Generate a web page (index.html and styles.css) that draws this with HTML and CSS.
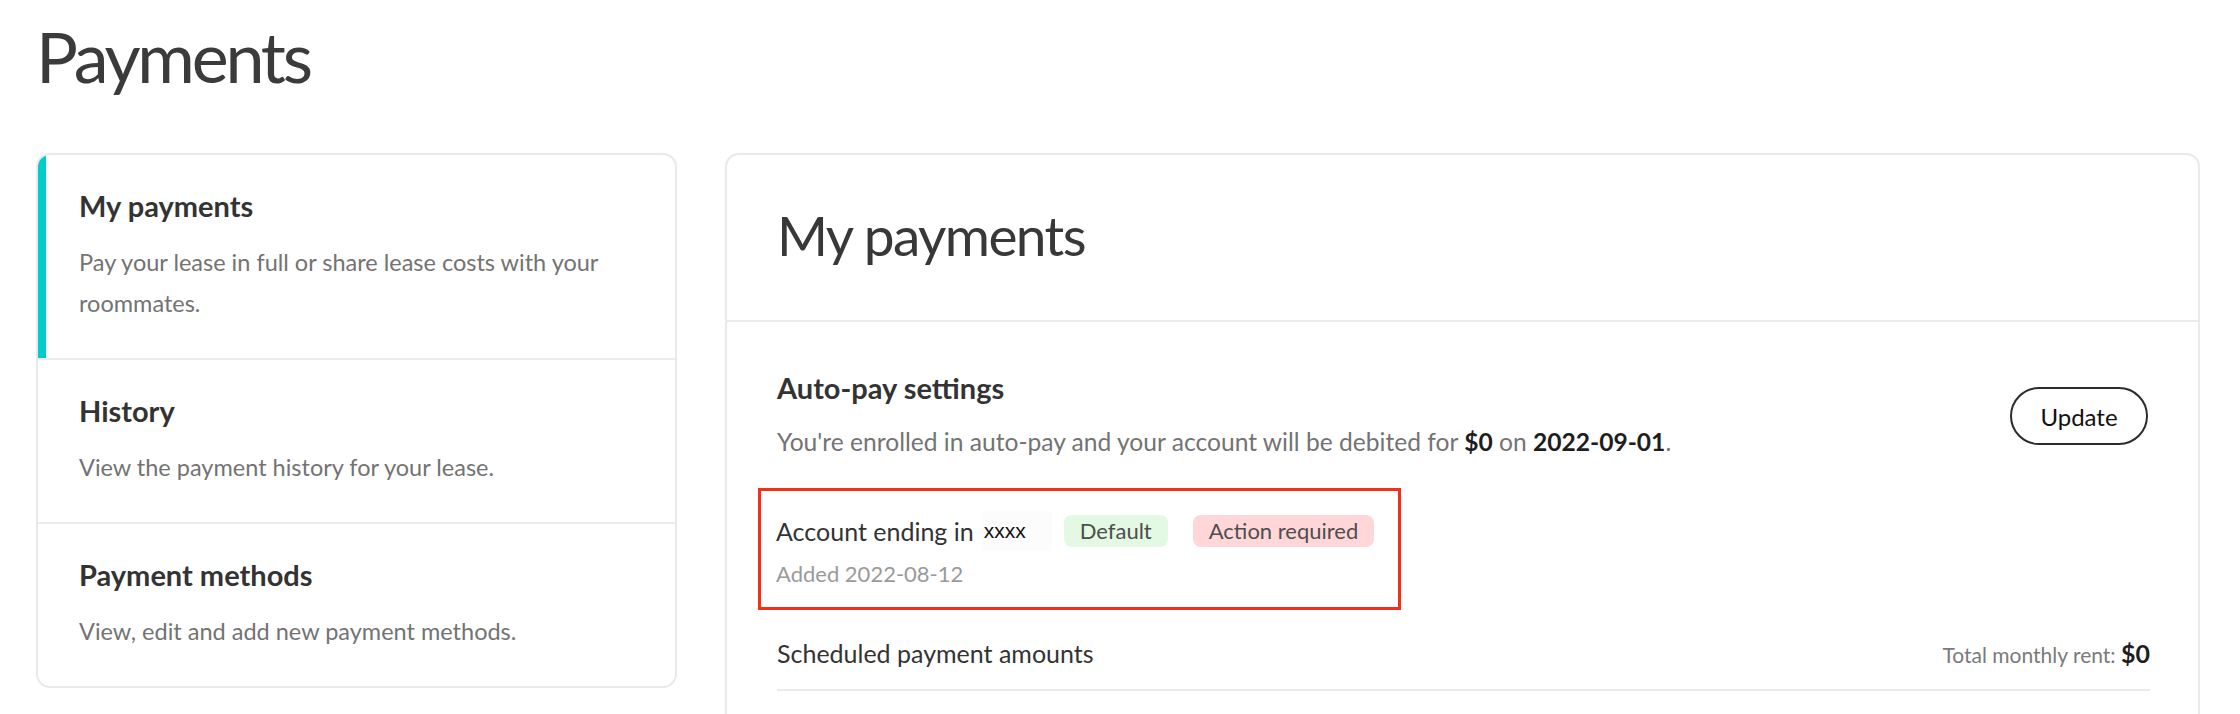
FILE: index.html
```html
<!DOCTYPE html>
<html lang="en">
<head>
<meta charset="utf-8">
<title>Payments</title>
<link rel="stylesheet" href="styles.css">
</head>
<body>
<div class="page">
  <h1 class="page-title">Payments</h1>
  <div class="layout">
    <nav class="side-card">
      <a class="nav-item active" href="#">
        <h2 class="nav-title">My payments</h2>
        <p class="nav-desc">Pay your lease in full or share lease costs with your roommates.</p>
      </a>
      <a class="nav-item" href="#">
        <h2 class="nav-title">History</h2>
        <p class="nav-desc">View the payment history for your lease.</p>
      </a>
      <a class="nav-item" href="#">
        <h2 class="nav-title">Payment methods</h2>
        <p class="nav-desc">View, edit and add new payment methods.</p>
      </a>
    </nav>
    <main class="main-card">
      <header class="main-header">
        <h2 class="main-title">My payments</h2>
      </header>
      <section class="main-body">
        <div class="autopay">
          <div class="autopay-text">
            <h3 class="section-title">Auto-pay settings</h3>
            <p class="autopay-desc">You're enrolled in auto-pay and your account will be debited for <strong>$0</strong> on <strong>2022-09-01</strong>.</p>
          </div>
          <button class="btn-update" type="button">Update</button>
        </div>
        <div class="account">
          <div class="account-row">
            <span class="account-name">Account ending in <span class="mask">xxxx</span></span>
            <span class="badge badge-default">Default</span>
            <span class="badge badge-action">Action required</span>
          </div>
          <div class="account-added">Added 2022-08-12</div>
        </div>
        <div class="scheduled">
          <span class="scheduled-title">Scheduled payment amounts</span>
          <span class="scheduled-total">Total monthly rent: <strong>$0</strong></span>
        </div>
        <div class="scheduled-list"></div>
      </section>
    </main>
  </div>
</div>
</body>
</html>
```

FILE: styles.css
```css
* { box-sizing: border-box; }

html, body {
  margin: 0;
  padding: 0;
  background: #ffffff;
}

body {
  font-family: Lato, "Noto Sans", "Liberation Sans", sans-serif;
  color: #333333;
  overflow: hidden;
}

.page {
  padding: 21px 40px 0 36px;
}

.page-title {
  margin: 0;
  font-size: 70px;
  line-height: 70px;
  font-weight: 400;
  color: #3b3b3b;
  letter-spacing: -3.2px;
}

.layout {
  display: flex;
  align-items: flex-start;
  gap: 48px;
  margin-top: 62px;
}

/* left navigation card */
.side-card {
  flex: 0 0 641px;
  border: 2px solid #e9e9e9;
  border-radius: 14px;
  overflow: hidden;
  display: flex;
  flex-direction: column;
}

.nav-item {
  display: block;
  padding: 33px 30px 34px 41px;
  text-decoration: none;
  color: inherit;
  border-top: 2px solid #ebebeb;
}

.nav-item:first-child {
  border-top: 0;
}

.nav-item.active {
  box-shadow: inset 8px 0 0 #00cccc;
}

.nav-title {
  margin: 0 0 18px;
  font-size: 29px;
  line-height: 36px;
  font-weight: 700;
  color: #333333;
}

.nav-desc {
  margin: 0;
  font-size: 23.5px;
  line-height: 41px;
  color: #737373;
}

/* main card */
.main-card {
  flex: 1 1 auto;
  border: 2px solid #e9e9e9;
  border-radius: 14px;
  min-height: 800px;
}

.main-header {
  padding: 47px 48px 52px 50px;
  border-bottom: 2px solid #ebebeb;
}

.main-title {
  margin: 0;
  font-size: 55px;
  line-height: 66px;
  font-weight: 400;
  color: #383838;
  letter-spacing: -1.6px;
}

.main-body {
  padding: 48px 48px 40px 50px;
}

.autopay {
  display: flex;
  align-items: center;
  justify-content: space-between;
  gap: 24px;
}

.section-title {
  margin: 0;
  font-size: 29px;
  line-height: 36px;
  font-weight: 700;
  color: #333333;
}

.autopay-desc {
  margin: 15px 0 0;
  font-size: 24.6px;
  line-height: 41px;
  color: #737373;
}

.autopay-desc strong {
  font-weight: 700;
  color: #1e1e1e;
}

.btn-update {
  flex: 0 0 auto;
  width: 138px;
  height: 58px;
  border: 2px solid #2b2b2b;
  border-radius: 29px;
  background: #ffffff;
  font-family: inherit;
  font-size: 24px;
  font-weight: 400;
  color: #111111;
  margin-right: 2px;
  cursor: pointer;
}

/* account block (highlighted) */
.account {
  display: inline-block;
  margin: 26px 0 0 -19px;
  padding: 24px 24px 18px 15px;
  border: 3px solid #f42f18;
}

.account-row {
  display: flex;
  align-items: center;
  height: 32px;
}

.account-name {
  font-size: 25px;
  color: #333333;
  display: flex;
  align-items: center;
}

.mask {
  display: inline-block;
  margin-left: 8px;
  padding: 0 26px 0 2px;
  font-family: "Liberation Sans", Arial, sans-serif;
  font-size: 21px;
  line-height: 40px;
  color: #111111;
  background: #fcfcfc;
}

.badge {
  display: inline-block;
  height: 32px;
  line-height: 32px;
  padding: 0 16px;
  border-radius: 8px;
  font-size: 22px;
  color: #4e4e4e;
}

.badge-default {
  margin-left: 12px;
  background: #e3f9e3;
}

.badge-action {
  margin-left: 25px;
  background: #ffd7d8;
}

.account-added {
  margin-top: 12px;
  font-size: 22px;
  line-height: 30px;
  color: #9a9a9a;
}

.scheduled {
  display: flex;
  align-items: baseline;
  justify-content: space-between;
  margin-top: 26px;
  padding-bottom: 19px;
  border-bottom: 2px solid #ebebeb;
}

.scheduled-title {
  font-size: 25px;
  line-height: 34px;
  color: #333333;
}

.scheduled-total {
  font-size: 21px;
  color: #7a7a7a;
}

.scheduled-total strong {
  font-size: 25px;
  font-weight: 700;
  color: #1e1e1e;
}

.scheduled-list {
  height: 60px;
}
```
